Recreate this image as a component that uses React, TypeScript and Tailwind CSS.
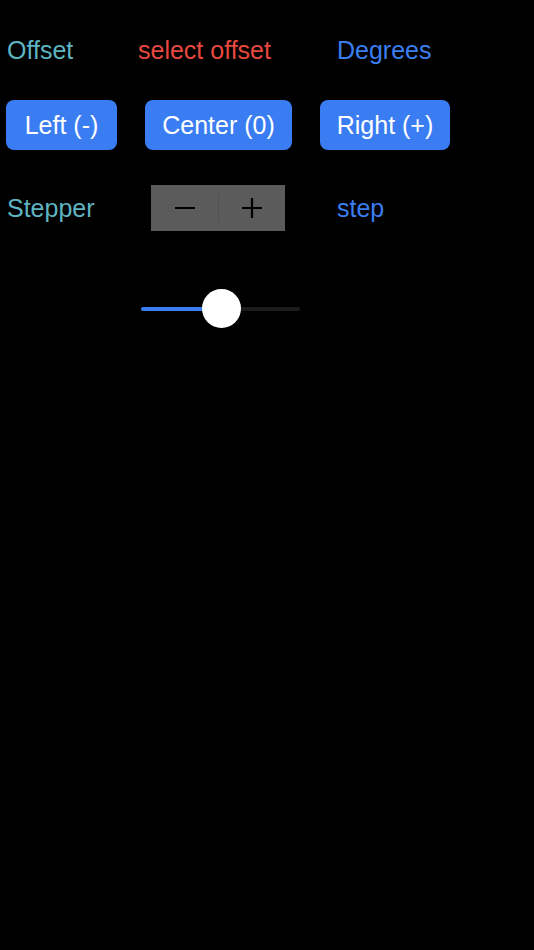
import React from "react";

export default function App() {
  return (
    <div
      className="w-[534px] h-[950px] bg-black text-[25px] leading-none"
      style={{ fontFamily: '"Liberation Sans", Arial, sans-serif' }}
    >
      <div className="pt-[38px] flex items-center h-[62px]">
        <span className="ml-[7px] w-[131px] text-[#5fb4c2]">Offset</span>
        <span className="w-[199px] text-[#e8493e]">select offset</span>
        <span className="text-[#3b7ef0]">Degrees</span>
      </div>
      <div className="mt-[38px] flex items-center">
        <button className="ml-[6px] w-[111px] h-[50px] rounded-[8px] bg-[#3a7df3] text-white">Left (-)</button>
        <button className="ml-[28px] w-[147px] h-[50px] rounded-[8px] bg-[#3a7df3] text-white">Center (0)</button>
        <button className="ml-[28px] w-[130px] h-[50px] rounded-[8px] bg-[#3a7df3] text-white">Right (+)</button>
      </div>
      <div className="mt-[35px] flex items-center h-[46px]">
        <span className="ml-[7px] w-[144px] text-[#5fb4c2]">Stepper</span>
        <div className="w-[134px] h-[46px] bg-[#5b5b5b] flex items-center">
          <div className="w-[67px] h-full flex items-center justify-center">
            <div className="w-[20px] h-[2px] bg-black" />
          </div>
          <div className="w-px h-[30px] bg-[#525252]" />
          <div className="flex-1 h-full flex items-center justify-center">
            <svg width="20" height="20" viewBox="0 0 20 20">
              <path d="M10 0V20M0 10H20" stroke="black" strokeWidth="2.2" />
            </svg>
          </div>
        </div>
        <span className="ml-[52px] text-[#3b7ef0]">step</span>
      </div>
      <div className="mt-[58px] ml-[141px] w-[159px] h-[39px] relative flex items-center">
        <div className="w-full h-[4px] rounded-full bg-[#1c1c1e] flex">
          <div className="w-[70px] h-full rounded-full bg-[#3a7df3]" />
        </div>
        <div className="absolute left-[61px] top-0 w-[39px] h-[39px] rounded-full bg-white shadow" />
      </div>
    </div>
  );
}
